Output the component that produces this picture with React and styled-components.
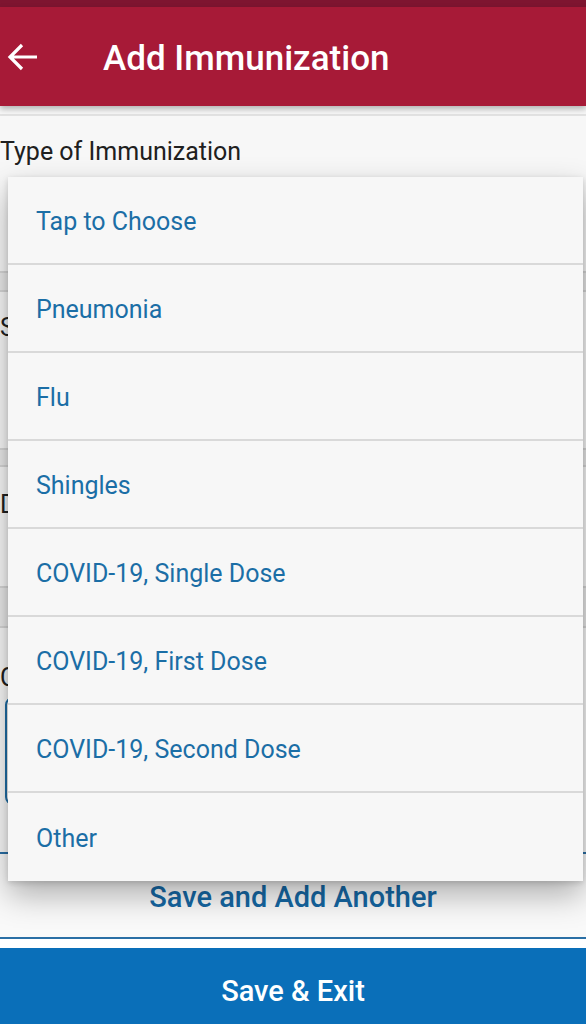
import React from "react";
import styled, { createGlobalStyle } from "styled-components";

const Global = createGlobalStyle`
  html, body { margin: 0; padding: 0; }
  body {
    background: #f7f7f7;
    font-family: Roboto, "Noto Sans", "Liberation Sans", sans-serif;
    overflow: hidden;
  }
  * { box-sizing: border-box; }
`;

const Screen = styled.div`
  position: relative;
  width: 586px;
  height: 1024px;
  display: flex;
  flex-direction: column;
  background: #f7f7f7;
  overflow: hidden;
`;

const StatusBar = styled.div`
  height: 7px;
  background: #7e1530;
  flex: none;
`;

const Header = styled.header`
  height: 99px;
  flex: none;
  background: #a71a37;
  display: flex;
  align-items: center;
  padding-left: 7px;
  box-shadow: 0 3px 6px rgba(0, 0, 0, 0.28);
  position: relative;
  z-index: 2;
`;

const BackButton = styled.button`
  border: 0;
  background: none;
  padding: 0;
  width: 34px;
  height: 30px;
  display: flex;
  align-items: center;
  cursor: pointer;
`;

const Title = styled.h1`
  margin: 3px 0 0 62px;
  color: #ffffff;
  font-size: 35px;
  font-weight: 500;
  letter-spacing: 0;
`;

const Form = styled.main`
  flex: 1;
  display: flex;
  flex-direction: column;
  border-top: 2px solid #e2e2e2;
  margin-top: 8px;
`;

const Label = styled.div`
  font-size: 25px;
  color: #202020;
  line-height: 30px;
  padding-top: ${(p) => p.$top}px;
  height: ${(p) => p.$h}px;
  white-space: nowrap;
`;

const Field = styled.div`
  height: ${(p) => p.$h}px;
  border-bottom: 2px solid #d6d6d6;
  background: #f7f7f7;
`;

const Band = styled.div`
  height: ${(p) => p.$h}px;
  background: #e9e9e9;
  border-bottom: 2px solid #d6d6d6;
`;

const TextBox = styled.div`
  margin: 0 3px 0 5px;
  height: 108px;
  border: 2px solid #1f6ea6;
  border-radius: 8px;
  background: #f7f7f7;
`;

const Footer = styled.footer`
  flex: none;
  display: flex;
  flex-direction: column;
`;

const AddAnother = styled.button`
  height: 87px;
  border: 0;
  border-top: 2px solid #2a6fa5;
  border-bottom: 2px solid #2a6fa5;
  background: #f9f9f9;
  color: #1567a3;
  font-family: Roboto, "Noto Sans", sans-serif;
  font-size: 29px;
  font-weight: 500;
  padding-top: 4px;
  margin-top: 12px;
`;

const Gap = styled.div`
  height: 9px;
  background: #ffffff;
`;

const SaveExit = styled.button`
  height: 76px;
  border: 0;
  background: #0a6fb9;
  color: #ffffff;
  font-family: Roboto, "Noto Sans", sans-serif;
  font-size: 29px;
  font-weight: 500;
  padding-top: 11px;
`;

const Menu = styled.ul`
  position: absolute;
  left: 8px;
  top: 177px;
  width: 575px;
  margin: 0;
  padding: 0;
  list-style: none;
  background: #f7f7f7;
  box-shadow: 0 14px 30px rgba(0, 0, 0, 0.3), 0 2px 6px rgba(0, 0, 0, 0.15);
  z-index: 5;
`;

const MenuItem = styled.li`
  height: 88px;
  display: flex;
  align-items: center;
  padding: 3px 0 0 28px;
  font-size: 25px;
  color: #1b6ea6;
  border-bottom: ${(p) => (p.$last ? "0" : "2px solid #d9d9d9")};
`;

const options = [
  "Tap to Choose",
  "Pneumonia",
  "Flu",
  "Shingles",
  "COVID-19, Single Dose",
  "COVID-19, First Dose",
  "COVID-19, Second Dose",
  "Other",
];

export default function App() {
  return (
    <Screen>
      <Global />
      <StatusBar />
      <Header>
        <BackButton aria-label="Back">
          <svg width="32" height="30" viewBox="0 0 32 30">
            <path
              d="M30 15 H3 M15 3 L3 15 L15 27"
              fill="none"
              stroke="#ffffff"
              strokeWidth="3.2"
            />
          </svg>
        </BackButton>
        <Title>Add Immunization</Title>
      </Header>
      <Form>
        <Label $top={21} $h={61}>Type of Immunization</Label>
        <Field $h={96} />
        <Band $h={19} />
        <Label $top={21} $h={58}>Status</Label>
        <Field $h={100} />
        <Band $h={17} />
        <Label $top={23} $h={63}>Date Given</Label>
        <Field $h={58} />
        <Band $h={40} />
        <Label $top={35} $h={69}>Comments</Label>
        <TextBox />
      </Form>
      <Footer>
        <AddAnother>Save and Add Another</AddAnother>
        <Gap />
        <SaveExit>Save &amp; Exit</SaveExit>
      </Footer>
      <Menu>
        {options.map((o, i) => (
          <MenuItem key={o} $last={i === options.length - 1}>
            {o}
          </MenuItem>
        ))}
      </Menu>
    </Screen>
  );
}
